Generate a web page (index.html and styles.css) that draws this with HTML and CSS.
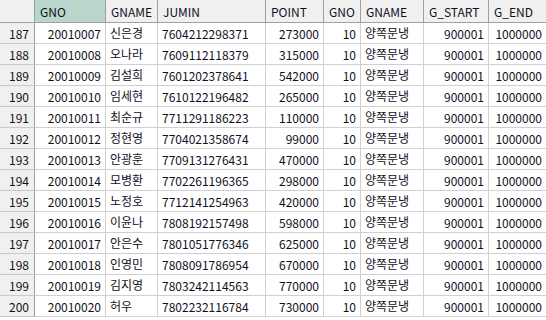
FILE: index.html
```html
<!DOCTYPE html>
<html>
<head>
<meta charset="utf-8">
<link rel="stylesheet" href="styles.css">
</head>
<body>
<div class="grid">
  <div class="h corner"></div>
  <div class="h sel">GNO</div>
  <div class="h">GNAME</div>
  <div class="h">JUMIN</div>
  <div class="h">POINT</div>
  <div class="h">GNO</div>
  <div class="h">GNAME</div>
  <div class="h">G_START</div>
  <div class="h">G_END</div>

  <div class="rn">187</div><div class="c r">20010007</div><div class="c k">신은경</div><div class="c l">7604212298371</div><div class="c r">273000</div><div class="c r">10</div><div class="c k">양쪽문냉</div><div class="c r">900001</div><div class="c r">1000000</div>
  <div class="rn">188</div><div class="c r">20010008</div><div class="c k">오나라</div><div class="c l">7609112118379</div><div class="c r">315000</div><div class="c r">10</div><div class="c k">양쪽문냉</div><div class="c r">900001</div><div class="c r">1000000</div>
  <div class="rn">189</div><div class="c r">20010009</div><div class="c k">김설희</div><div class="c l">7601202378641</div><div class="c r">542000</div><div class="c r">10</div><div class="c k">양쪽문냉</div><div class="c r">900001</div><div class="c r">1000000</div>
  <div class="rn">190</div><div class="c r">20010010</div><div class="c k">임세현</div><div class="c l">7610122196482</div><div class="c r">265000</div><div class="c r">10</div><div class="c k">양쪽문냉</div><div class="c r">900001</div><div class="c r">1000000</div>
  <div class="rn">191</div><div class="c r">20010011</div><div class="c k">최순규</div><div class="c l">7711291186223</div><div class="c r">110000</div><div class="c r">10</div><div class="c k">양쪽문냉</div><div class="c r">900001</div><div class="c r">1000000</div>
  <div class="rn">192</div><div class="c r">20010012</div><div class="c k">정현영</div><div class="c l">7704021358674</div><div class="c r">99000</div><div class="c r">10</div><div class="c k">양쪽문냉</div><div class="c r">900001</div><div class="c r">1000000</div>
  <div class="rn">193</div><div class="c r">20010013</div><div class="c k">안광훈</div><div class="c l">7709131276431</div><div class="c r">470000</div><div class="c r">10</div><div class="c k">양쪽문냉</div><div class="c r">900001</div><div class="c r">1000000</div>
  <div class="rn">194</div><div class="c r">20010014</div><div class="c k">모병환</div><div class="c l">7702261196365</div><div class="c r">298000</div><div class="c r">10</div><div class="c k">양쪽문냉</div><div class="c r">900001</div><div class="c r">1000000</div>
  <div class="rn">195</div><div class="c r">20010015</div><div class="c k">노정호</div><div class="c l">7712141254963</div><div class="c r">420000</div><div class="c r">10</div><div class="c k">양쪽문냉</div><div class="c r">900001</div><div class="c r">1000000</div>
  <div class="rn">196</div><div class="c r">20010016</div><div class="c k">이윤나</div><div class="c l">7808192157498</div><div class="c r">598000</div><div class="c r">10</div><div class="c k">양쪽문냉</div><div class="c r">900001</div><div class="c r">1000000</div>
  <div class="rn">197</div><div class="c r">20010017</div><div class="c k">안은수</div><div class="c l">7801051776346</div><div class="c r">625000</div><div class="c r">10</div><div class="c k">양쪽문냉</div><div class="c r">900001</div><div class="c r">1000000</div>
  <div class="rn">198</div><div class="c r">20010018</div><div class="c k">인영민</div><div class="c l">7808091786954</div><div class="c r">670000</div><div class="c r">10</div><div class="c k">양쪽문냉</div><div class="c r">900001</div><div class="c r">1000000</div>
  <div class="rn">199</div><div class="c r">20010019</div><div class="c k">김지영</div><div class="c l">7803242114563</div><div class="c r">770000</div><div class="c r">10</div><div class="c k">양쪽문냉</div><div class="c r">900001</div><div class="c r">1000000</div>
  <div class="rn">200</div><div class="c r">20010020</div><div class="c k">허우</div><div class="c l">7802232116784</div><div class="c r">730000</div><div class="c r">10</div><div class="c k">양쪽문냉</div><div class="c r">900001</div><div class="c r">1000000</div>
</div>
</body>
</html>
```
FILE: styles.css
```css
html, body {
  margin: 0;
  padding: 0;
  background: #ffffff;
}
body {
  width: 546px;
  height: 320px;
  overflow: hidden;
}
.grid {
  display: grid;
  grid-template-columns: 35px 71px 52px 108px 58px 37px 63px 65px 58px;
  grid-template-rows: 23px repeat(14, 21px);
  font-family: "Noto Sans CJK KR", "Noto Sans", sans-serif;
  font-size: 12px;
  color: #10101c;
}
.grid > div {
  box-sizing: border-box;
  white-space: nowrap;
  overflow: hidden;
  display: flex;
  align-items: center;
}
.h {
  background: #f0f0f0;
  border-right: 1px solid #a0a0a0;
  border-bottom: 1px solid #a0a0a0;
  padding: 1px 0 0 5px;
}
.h.sel {
  background: #b9d6cc;
}
.corner {
  padding: 0;
}
.rn {
  background: #f0f0f0;
  border-right: 1px solid #a0a0a0;
  border-bottom: 1px solid #c8c8c8;
  justify-content: flex-end;
  padding: 1px 5px 0 0;
}
.c {
  border-right: 1px solid #d0d0d0;
  border-bottom: 1px solid #d0d0d0;
  padding-top: 1px;
}
.r {
  justify-content: flex-end;
  padding-right: 4px;
}
.l {
  padding-left: 4px;
}
.k {
  padding-left: 4px;
  padding-top: 0;
  padding-bottom: 2px;
}
```
